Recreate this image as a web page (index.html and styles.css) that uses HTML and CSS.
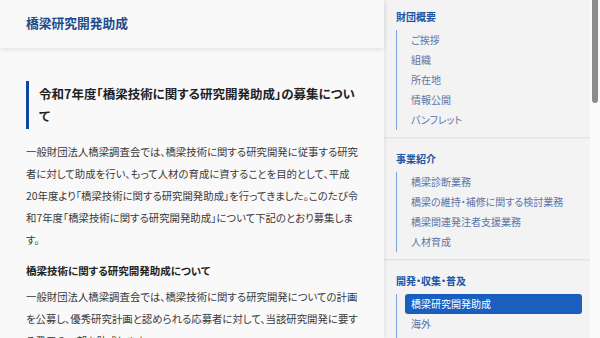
FILE: index.html
```html
<!DOCTYPE html>
<html>
<head>
    <title>橋梁研究開発助成</title>
    <link rel="stylesheet" href="styles.css">
</head>
<body>
    <div class="page">
        <main class="main">
            <header class="page-header">
                <h1 class="page-title">橋梁研究開発助成</h1>
            </header>

            <section class="article">
                <h2 class="article-title">令和7年度「橋梁技術に関する研究開発助成」の募集について</h2>
                <p>一般財団法人橋梁調査会では、橋梁技術に関する研究開発に従事する研究者に対して助成を行い、もって人材の育成に資することを目的として、平成20年度より「橋梁技術に関する研究開発助成」を行ってきました。このたび令和7年度「橋梁技術に関する研究開発助成」について下記のとおり募集します。</p>

                <h3 class="article-sub">橋梁技術に関する研究開発助成について</h3>
                <p>一般財団法人橋梁調査会では、橋梁技術に関する研究開発についての計画を公募し、優秀研究計画と認められる応募者に対して、当該研究開発に要する費用の一部を助成します。</p>
            </section>
        </main>

        <aside class="sidebar">
            <div class="side-section">
                <div class="side-heading">財団概要</div>
                <ul class="side-list">
                    <li><a href="#">ご挨拶</a></li>
                    <li><a href="#">組織</a></li>
                    <li><a href="#">所在地</a></li>
                    <li><a href="#">情報公開</a></li>
                    <li><a href="#">パンフレット</a></li>
                </ul>
            </div>
            <div class="side-section">
                <div class="side-heading">事業紹介</div>
                <ul class="side-list">
                    <li><a href="#">橋梁診断業務</a></li>
                    <li><a href="#">橋梁の維持・補修に関する検討業務</a></li>
                    <li><a href="#">橋梁関連発注者支援業務</a></li>
                    <li><a href="#">人材育成</a></li>
                </ul>
            </div>
            <div class="side-section">
                <div class="side-heading">開発・収集・普及</div>
                <ul class="side-list">
                    <li><a href="#" class="active">橋梁研究開発助成</a></li>
                    <li><a href="#">海外</a></li>
                    <li><a href="#">資料</a></li>
                </ul>
            </div>
        </aside>

        <div class="scrollbar">
            <div class="scroll-thumb"></div>
        </div>
    </div>
</body>
</html>
```

FILE: styles.css
```css
html, body {
    margin: 0;
    padding: 0;
    height: 100%;
    overflow: hidden;
}

body {
    font-family: "Noto Sans CJK JP", "Noto Sans", sans-serif;
    font-feature-settings: "palt";
    background: #f3f3f3;
    color: #333;
}

.page {
    display: flex;
    height: 100%;
}

.main {
    width: 384px;
    flex-shrink: 0;
    background: #f9f9f9;
    box-shadow: 1px 0 4px rgba(0,0,0,0.07);
    position: relative;
    z-index: 1;
}

.page-header {
    height: 48px;
    display: flex;
    align-items: center;
    padding-left: 26px;
    background: #f8f8f8;
    box-shadow: 0 2px 5px rgba(0,0,0,0.09);
}

.page-title {
    margin: 0;
    font-size: 12.75px;
    font-weight: bold;
    color: #1e4b8a;
    line-height: 1;
    padding-bottom: 2px;
}

.article {
    padding: 33px 0 0 26px;
    width: 334px;
}

.article-title {
    margin: 0 0 12px 0;
    padding: 2px 0 2px 10px;
    border-left: 3px solid #0d47a1;
    font-size: 12.5px;
    font-weight: bold;
    line-height: 22px;
    color: #222;
}

.article p {
    margin: 0;
    font-size: 10.4px;
    line-height: 22px;
    color: #3a3a3a;
}

.article-sub {
    margin: 9px 0 4px 0;
    font-size: 10.5px;
    font-weight: bold;
    line-height: 22px;
    color: #222;
}

.sidebar {
    width: 206px;
    flex-shrink: 0;
    background: #f3f3f3;
}

.side-section {
    padding: 14px 8px 7px 12px;
    border-top: 1px solid #e3e3e3;
    box-shadow: inset 0 1px 1px rgba(0,0,0,0.03);
}

.side-section:first-child {
    padding-top: 10px;
    border-top: none;
    box-shadow: none;
}

.side-heading {
    font-size: 10px;
    font-weight: bold;
    line-height: 14px;
    color: #2054a4;
    margin-bottom: 6px;
}

.side-list {
    list-style: none;
    margin: 0;
    padding: 0 0 0 8px;
    border-left: 1px solid #7aa3e0;
}

.side-list a {
    display: block;
    height: 20px;
    line-height: 20px;
    padding: 0 6px;
    font-size: 10px;
    color: #5a73a8;
    text-decoration: none;
    border-radius: 3px;
}

.side-list a.active {
    background: #1a5fc0;
    color: #fff;
}

.scrollbar {
    width: 10px;
    flex-shrink: 0;
    background: #fafafa;
    display: flex;
    justify-content: center;
}

.scroll-thumb {
    width: 6px;
    height: 103px;
    background: #8c8c8c;
    border-radius: 0 0 3px 3px;
}
```
